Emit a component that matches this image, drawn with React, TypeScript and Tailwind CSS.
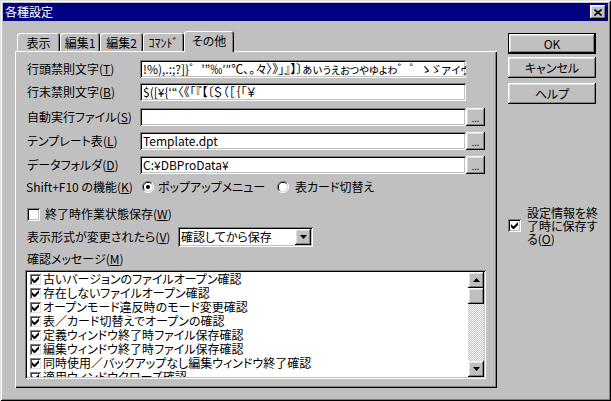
import type { ReactNode } from "react";

// Win95-style "各種設定" dialog, その他 tab open.

const raised =
  "bg-[#c0c0c0] shadow-[inset_-1px_-1px_#000,inset_1px_1px_#fff,inset_-2px_-2px_#808080,inset_2px_2px_#dfdfdf]";
const sunken =
  "bg-white shadow-[inset_1px_1px_#808080,inset_-1px_-1px_#fff,inset_2px_2px_#000,inset_-2px_-2px_#c0c0c0]";

function Key({ k }: { k: string }) {
  return (
    <>
      (<span className="underline underline-offset-[1px]">{k}</span>)
    </>
  );
}

function Check({ size = 13, on = false }: { size?: number; on?: boolean }) {
  return (
    <div
      className={`${size === 13 ? "w-[13px] h-[13px]" : "w-[11px] h-[11px]"} shrink-0 flex items-center justify-center ${
        size === 13
          ? sunken
          : "bg-white shadow-[inset_1px_1px_#808080,inset_-1px_-1px_#dfdfdf,inset_2px_2px_#404040]"
      }`}
    >
      {on ? (
        <svg width="7" height="7" viewBox="0 0 7 7">
          <path d="M0 2v3l2 2h1l4-4V0L2.5 4.5z" fill="#000" />
        </svg>
      ) : null}
    </div>
  );
}

function Radio({ on = false }: { on?: boolean }) {
  return (
    <svg width="12" height="12" viewBox="0 0 12 12" className="shrink-0">
      <path d="M2 10A5.5 5.5 0 0 1 10 2" stroke="#808080" strokeWidth="1" fill="none" />
      <path d="M2.7 9.3A4.5 4.5 0 0 1 9.3 2.7" stroke="#000" strokeWidth="1" fill="none" />
      <path d="M10 2A5.5 5.5 0 0 1 2 10" stroke="#fff" strokeWidth="1" fill="none" />
      <path d="M9.3 2.7A4.5 4.5 0 0 1 2.7 9.3" stroke="#dfdfdf" strokeWidth="1" fill="none" />
      <circle cx="6" cy="6" r="4" fill="#fff" />
      {on ? <circle cx="6" cy="6" r="2" fill="#000" /> : null}
    </svg>
  );
}

function Arrow({ up = false }: { up?: boolean }) {
  return (
    <svg width="7" height="4" viewBox="0 0 7 4">
      <path d={up ? "M3.5 0L7 4H0z" : "M0 0h7L3.5 4z"} fill="#000" />
    </svg>
  );
}

function FieldRow({
  label,
  value,
  browse,
  className = "",
}: {
  label: ReactNode;
  value: string;
  browse?: boolean;
  className?: string;
}) {
  return (
    <div className={`flex items-center h-[18px] ${className}`}>
      <div className="w-[113px] whitespace-nowrap">{label}</div>
      <div className={`${sunken} w-[326px] h-[18px] flex items-center pl-[3px] pr-[2px] overflow-hidden whitespace-nowrap`}>
        {value}
      </div>
      {browse ? (
        <div className={`${raised} w-[19px] h-[18px] flex items-end justify-center pb-[3px] text-[9px] leading-[9px]`}>
          ...
        </div>
      ) : null}
    </div>
  );
}

const tabs = [
  { label: "表示", w: "w-[43px]" },
  { label: "編集1", w: "w-[40px]" },
  { label: "編集2", w: "w-[43px]" },
  { label: "ｺﾏﾝﾄﾞ", w: "w-[41px]" },
];

const messages = [
  "古いバージョンのファイルオープン確認",
  "存在しないファイルオープン確認",
  "オープンモード違反時のモード変更確認",
  "表／カード切替えでオープンの確認",
  "定義ウィンドウ終了時ファイル保存確認",
  "編集ウィンドウ終了時ファイル保存確認",
  "同時使用／バックアップなし編集ウィンドウ終了確認",
  "適用ウィンドウクローズ確認",
];

export default function App() {
  return (
    <div className="w-[611px] h-[401px] bg-[#c0c0c0] font-['Noto_Sans_CJK_JP',sans-serif] [font-feature-settings:'palt'] text-[12px] leading-[14px] text-black shadow-[inset_1px_1px_#dfdfdf,inset_-1px_-1px_#000,inset_2px_2px_#fff,inset_-2px_-2px_#808080] p-[3px] flex flex-col overflow-hidden">
      {/* title bar */}
      <div className="h-[18px] bg-[#000080] flex items-center justify-between pl-[2px] pr-[2px] shrink-0">
        <span className="text-white text-[12px] leading-[14px]">各種設定</span>
        <div className={`${raised} w-[16px] h-[14px] flex items-center justify-center`}>
          <svg width="8" height="7" viewBox="0 0 8 7">
            <path d="M0.5 0.5l7 6M7.5 0.5l-7 6" stroke="#000" strokeWidth="1.6" />
          </svg>
        </div>
      </div>

      <div className="flex flex-1">
        {/* left: tabs + page */}
        <div className="ml-[12px] pt-[10px] w-[482px]">
          <div className="flex items-end h-[20px] pl-[2px]">
            {tabs.map((t) => (
              <div
                key={t.label}
                className={`${t.w} h-[18px] rounded-t-[3px] shadow-[inset_1px_1px_#fff,inset_-1px_0_#000,inset_-2px_0_#808080] flex items-center justify-center pt-[1px]`}
              >
                {t.label}
              </div>
            ))}
            <div className="relative z-10 w-[50px] h-[21px] mb-[-1px] bg-[#c0c0c0] rounded-t-[3px] shadow-[inset_1px_1px_#fff,inset_-1px_0_#000,inset_-2px_0_#808080] flex items-start justify-center pt-[3px]">
              その他
            </div>
          </div>

          <div className="h-[337px] w-[482px] shadow-[inset_1px_1px_#fff,inset_-1px_-1px_#000,inset_-2px_-2px_#808080] pt-[9px] pl-[12px] flex flex-col">
            <FieldRow
              label={<>行頭禁則文字<Key k="T" /></>}
              value="!%),.:;?]}゜’”‰′″℃、。々〉》」』】〕ぁぃぅぇぉっゃゅょゎ゛゜ゝゞァィゥ"
            />
            <FieldRow
              className="mt-[5px]"
              label={<>行末禁則文字<Key k="B" /></>}
              value="$([¥{‘“〈《「『【〔＄（［｛｢￥"
            />
            <FieldRow
              className="mt-[7px]"
              label={<>自動実行ファイル<Key k="S" /></>}
              value=""
              browse
            />
            <FieldRow
              className="mt-[6px]"
              label={<>テンプレート表<Key k="L" /></>}
              value="Template.dpt"
              browse
            />
            <FieldRow
              className="mt-[6px]"
              label={<>データフォルダ<Key k="D" /></>}
              value="C:¥DBProData¥"
              browse
            />

            <div className="mt-[5px] h-[16px] flex items-center -ml-[1px]">
              <div className="w-[116px] whitespace-nowrap">
                Shift+F10 の機能<Key k="K" />
              </div>
              <div className="w-[135px] flex items-center gap-[4px]">
                <Radio on />
                <span className="whitespace-nowrap">ポップアップメニュー</span>
              </div>
              <div className="flex items-center gap-[6px]">
                <Radio />
                <span className="whitespace-nowrap">表カード切替え</span>
              </div>
            </div>

            <div className="mt-[12px] h-[14px] flex items-center gap-[5px]">
              <Check />
              <span>
                終了時作業状態保存<Key k="W" />
              </span>
            </div>

            <div className="mt-[6px] h-[20px] flex items-center">
              <div className="w-[151px] whitespace-nowrap">
                表示形式が変更されたら<Key k="V" />
              </div>
              <div className={`${sunken} w-[135px] h-[20px] flex items-center pl-[3px] pr-[2px]`}>
                <span className="flex-1">確認してから保存</span>
                <div className={`${raised} w-[16px] h-[16px] flex items-center justify-center`}>
                  <Arrow />
                </div>
              </div>
            </div>

            <div className="mt-[5px] h-[14px]">
              確認メッセージ<Key k="M" />
            </div>

            <div className={`${sunken} mt-[4px] -ml-[2px] w-[461px] h-[109px] p-[2px] flex`}>
              <div className="flex-1 overflow-hidden flex flex-col">
                {messages.map((m) => (
                  <div key={m} className="h-[14px] shrink-0 flex items-center gap-[2px] pl-[3px] whitespace-nowrap">
                    <Check size={11} on />
                    <span>{m}</span>
                  </div>
                ))}
              </div>
              <div className="w-[16px] flex flex-col">
                <div className={`${raised} h-[16px] flex items-center justify-center`}>
                  <Arrow up />
                </div>
                <div className={`${raised} h-[16px]`} />
                <div className="flex-1 bg-[repeating-conic-gradient(#c0c0c0_0%_25%,#fff_0%_50%)] bg-[length:2px_2px]" />
                <div className={`${raised} h-[16px] flex items-center justify-center`}>
                  <Arrow />
                </div>
              </div>
            </div>
          </div>
        </div>

        {/* right: buttons */}
        <div className="ml-[11px] pt-[12px] w-[88px] flex flex-col">
          <div className="h-[21px] border border-black">
            <div className={`${raised} h-full flex items-center justify-center`}>OK</div>
          </div>
          <div className={`${raised} mt-[3px] h-[21px] flex items-center justify-center`}>キャンセル</div>
          <div className={`${raised} mt-[5px] h-[21px] flex items-center justify-center`}>ヘルプ</div>

          <div className="mt-[102px] flex items-center gap-[6px]">
            <Check on />
            <div className="leading-[13px] whitespace-nowrap">
              設定情報を終
              <br />
              了時に保存す
              <br />
              る<Key k="O" />
            </div>
          </div>
        </div>
      </div>
    </div>
  );
}
